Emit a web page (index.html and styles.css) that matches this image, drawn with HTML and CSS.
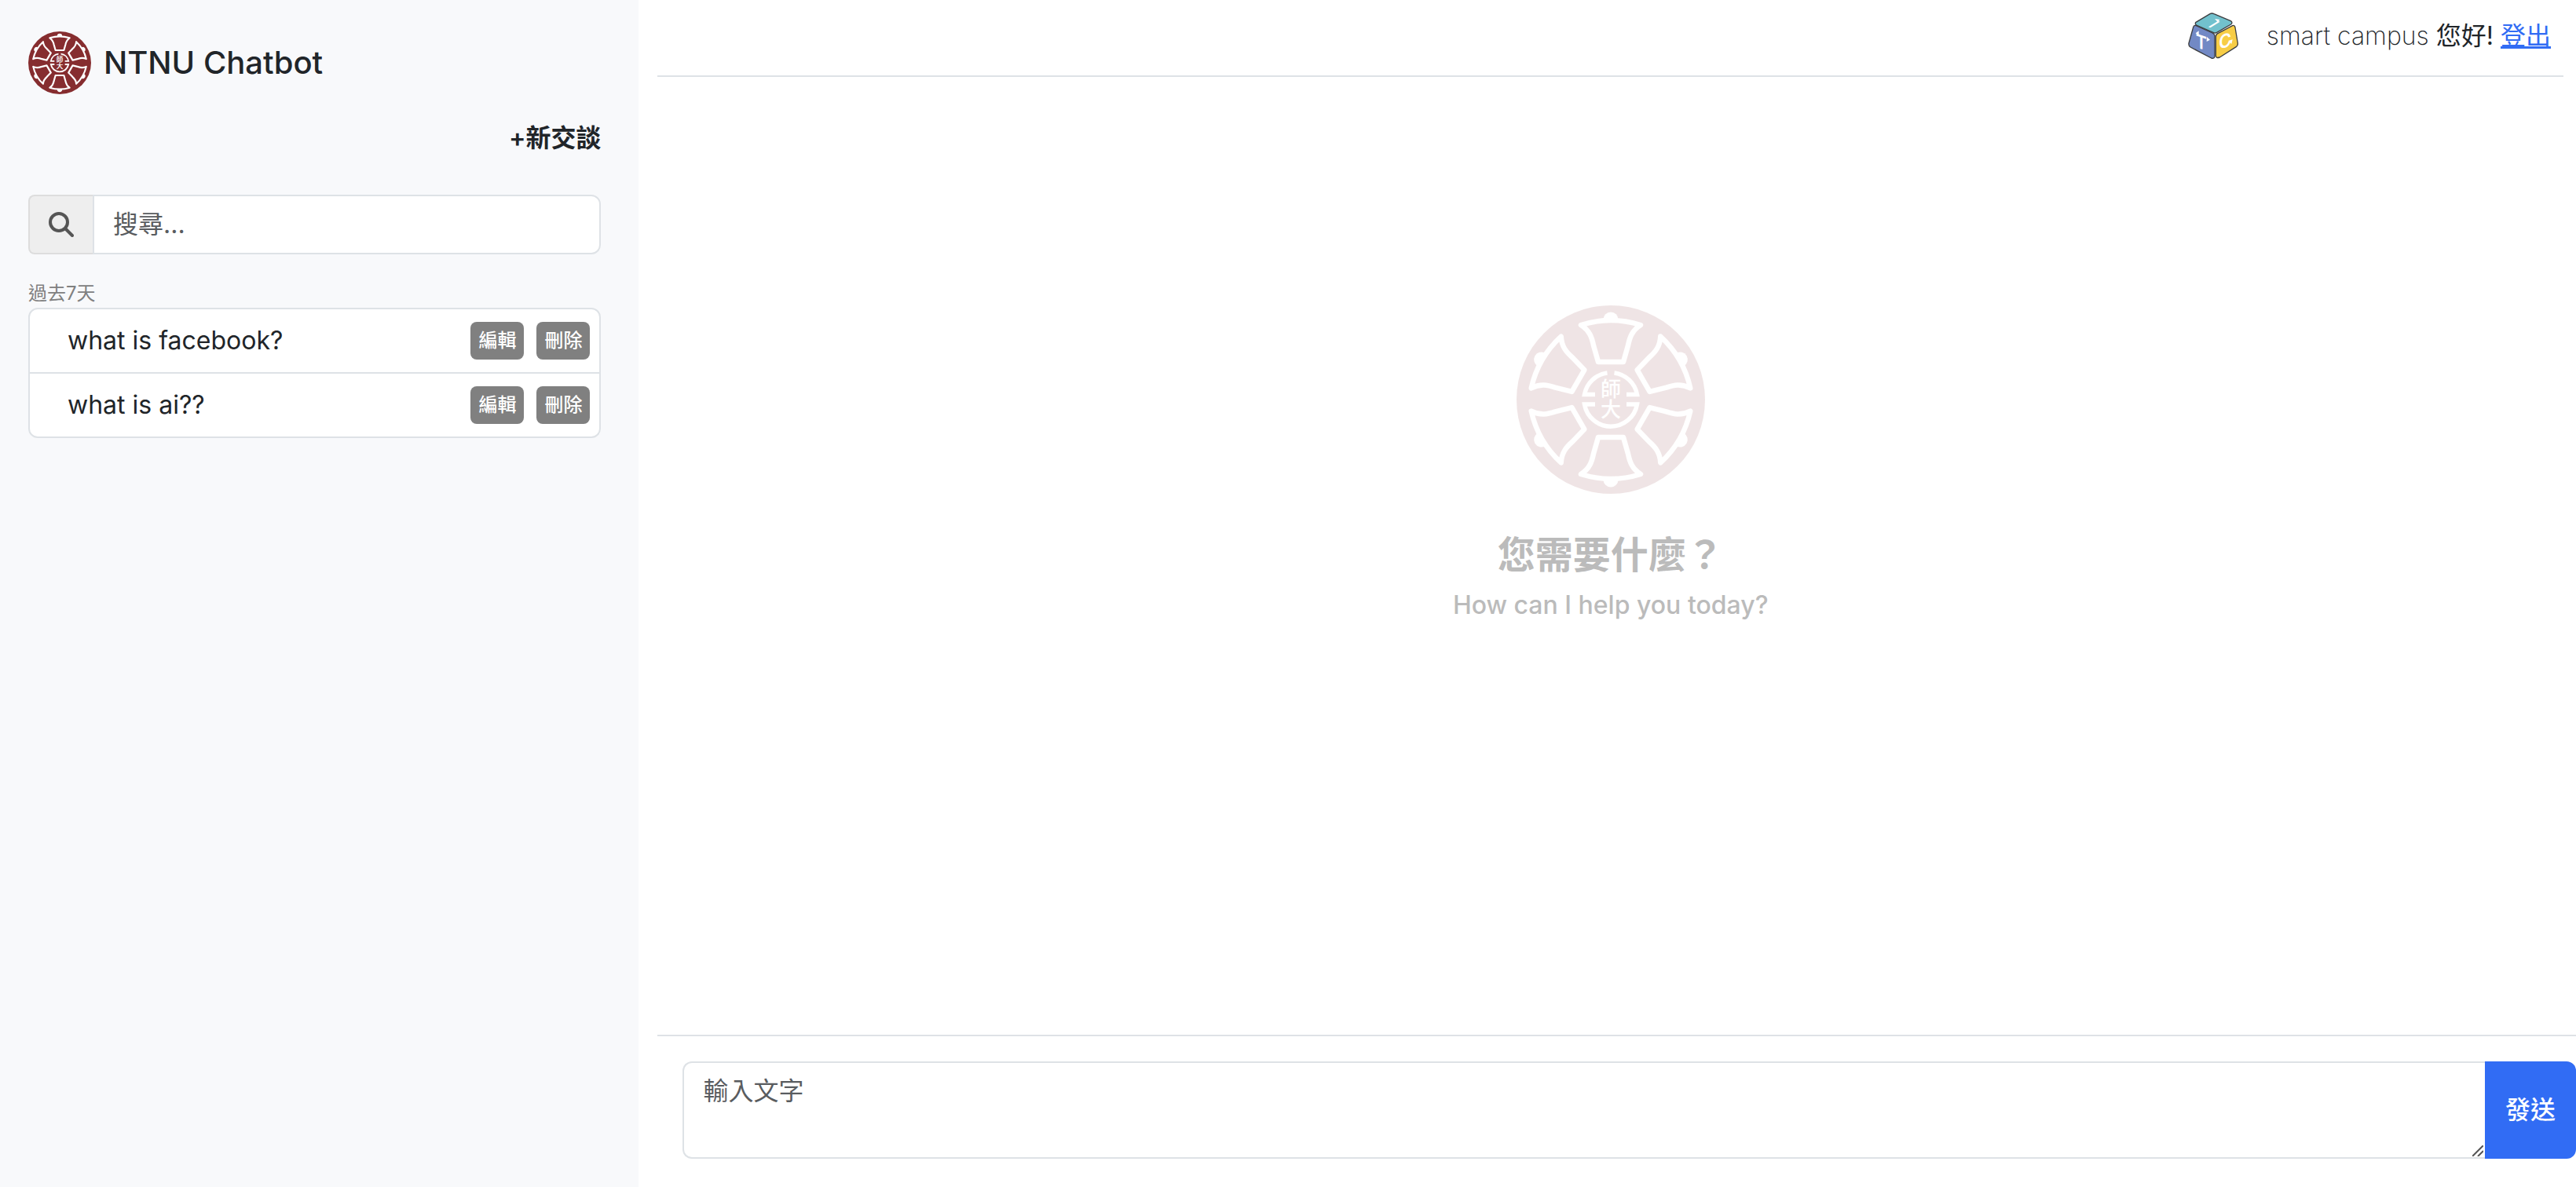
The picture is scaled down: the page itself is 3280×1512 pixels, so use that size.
FILE: index.html
```html
<!DOCTYPE html>
<html lang="zh-Hant">
<head>
    <meta charset="UTF-8">
    <meta name="viewport" content="width=device-width, initial-scale=1">
    <title>NTNU Chatbot</title>
    <link rel="stylesheet" href="styles.css">
</head>
<body>
    <svg class="defs" aria-hidden="true">
        <symbol id="emblem" viewBox="0 0 240 240" overflow="visible">
            <defs>
                <g id="petal">
                    <path d="M82 25 Q120 13 158 25 C147 32 144 41 142 51 L136 72 H104 L98 51 C96 41 93 32 82 25 Z" fill="none" stroke="#fff" stroke-width="6.5" stroke-linejoin="round"/>
                    <path d="M110.500 18 A9.500 9.500 0 0 1 129.500 18 Z" fill="#fff"/>
                </g>
            </defs>
            <circle cx="120" cy="120" r="120" fill="#862d2f"/>
            <use href="#petal"/>
            <use href="#petal" transform="rotate(60 120 120)"/>
            <use href="#petal" transform="rotate(120 120 120)"/>
            <use href="#petal" transform="rotate(180 120 120)"/>
            <use href="#petal" transform="rotate(240 120 120)"/>
            <use href="#petal" transform="rotate(300 120 120)"/>
            <g fill="none" stroke="#fff" stroke-width="5.500">
                <path d="M115.500 86 A34 34 0 0 0 86.500 113.500 H100"/>
                <path d="M124.500 86 A34 34 0 0 1 153.500 113.500 H140"/>
                <path d="M100 126 H86.500 A34 34 0 0 0 153.500 126 H140"/>
            </g>
            <text class="emblem-text" x="120" y="116">師</text>
            <text class="emblem-text" x="120" y="142">大</text>
        </symbol>
    </svg>

    <div class="layout">
        <aside class="sidebar">
            <div class="brand">
                <svg class="brand-logo" role="img" aria-label="NTNU"><use href="#emblem"/></svg>
                <h1>NTNU Chatbot</h1>
            </div>
            <button type="button" class="new-chat">+新交談</button>
            <form class="search">
                <label for="search" aria-label="搜尋">
                    <svg class="search-icon" viewBox="0 0 32 32" fill="none" stroke="#555" stroke-width="4" stroke-linecap="round">
                        <circle cx="13" cy="13" r="11"/>
                        <path d="M21.500 21.500 L30 30"/>
                    </svg>
                </label>
                <input type="text" id="search" placeholder="搜尋...">
            </form>
            <h2 class="period">過去7天</h2>
            <ul class="history">
                <li>
                    <a href="#">what is facebook?</a>
                    <button type="button">編輯</button>
                    <button type="button">刪除</button>
                </li>
                <li>
                    <a href="#">what is ai??</a>
                    <button type="button">編輯</button>
                    <button type="button">刪除</button>
                </li>
            </ul>
        </aside>

        <main class="main">
            <header class="topbar">
                <svg class="itc-logo" viewBox="50 38 192 180" role="img" aria-label="ITC">
                    <g stroke="#3b3d40" stroke-width="4" stroke-linejoin="round">
                        <path d="M80 75 L134 43 Q141 39 149 43 L213 70 Q222 76 214 83 L160 114 Q153 118 146 114 L82 86 Q75 80 80 75 Z" fill="#72c1cd"/>
                        <path d="M81 88 L143 116 Q152 120 152 129 L152 204 Q151 216 139 212 L59 170 Q51 165 53 155 L70 94 Q73 85 81 88 Z" fill="#7289c5"/>
                        <path d="M165 117 L220 88 Q228 85 230 95 L240 155 Q241 163 235 168 L171 209 Q157 214 156 203 L156 130 Q156 121 165 117 Z" fill="#f7cd46"/>
                    </g>
                    <g class="itc-text">
                        <text class="itc-i" transform="matrix(.9 .38 -.9 .55 124 91)">I</text>
                        <text transform="matrix(.9 .3 0 1 79 170)">T</text>
                        <text transform="matrix(.9 -.3 0 1 168 180)">C</text>
                    </g>
                    <g fill="#fff">
                        <path d="M152 62 L171 65 L164 75 Z"/>
                        <path d="M79 117 L91 108 L91 126 Z"/>
                        <path d="M134 142 L122 131 L121 149 Z"/>
                        <path d="M203 146 L220 141 L216 158 Z"/>
                    </g>
                </svg>
                <p><span class="user-name">smart campus</span> 您好! <a href="#">登出</a></p>
            </header>

            <section class="welcome">
                <svg class="welcome-logo" aria-hidden="true"><use href="#emblem"/></svg>
                <h2>您需要什麼？</h2>
                <p>How can I help you today?</p>
            </section>

            <form class="composer">
                <div class="message">
                    <textarea aria-label="輸入文字" placeholder="輸入文字"></textarea>
                    <svg class="grip" viewBox="0 0 14 14" stroke="#555" stroke-width="2" aria-hidden="true">
                        <path d="M0 14 L14 0 M7 14 L14 7"/>
                    </svg>
                </div>
                <button type="submit">發送</button>
            </form>
        </main>
    </div>
</body>
</html>
```

FILE: styles.css
```css
* { box-sizing: border-box; }
body { margin: 0; font-family: Inter, "Noto Sans CJK TC", sans-serif; font-size: 32px; line-height: 48px; color: #212529; background: #fff; }
h1, h2, p, ul { margin: 0; padding: 0; }
button, input, textarea { font: inherit; }
button { border: none; cursor: pointer; }
.defs { position: absolute; width: 0; height: 0; }
.layout { display: flex; min-height: 100vh; }

/* sidebar */
.sidebar { width: 24.8%; padding: 40px 48px 40px 36px; background: #f8f9fb; display: flex; flex-direction: column; }
.brand { display: flex; align-items: center; gap: 16px; }
.brand-logo { width: 80px; height: 80px; overflow: visible; }
.brand h1 { font-size: 40px; font-weight: 500; }
.new-chat { align-self: flex-end; margin: 32px 0 48px; padding: 0; background: none; color: inherit; font-weight: 600; }
.search { display: flex; height: 76px; }
.search label { display: flex; align-items: center; justify-content: center; width: 82px; background: #eee; border: 2px solid #ddd; border-right: none; border-radius: 8px 0 0 8px; }
.search-icon { width: 32px; height: 32px; }
.search input { flex: 1; min-width: 0; padding: 0 24px; background: #fff; border: 2px solid #dee2e6; border-radius: 0 12px 12px 0; }
::placeholder { color: #595c5f; opacity: 1; }
.period { margin-top: 32px; font-size: 24px; font-weight: 400; line-height: 36px; color: #808080; }
.history { list-style: none; background: #fff; border: 2px solid #dee2e6; border-radius: 12px; }
.history li { display: flex; align-items: center; gap: 16px; height: 80px; padding: 0 12px 0 48px; }
.history li + li { height: 82px; border-top: 2px solid #dee2e6; }
.history a { flex: 1; color: inherit; text-decoration: none; }
.history button { height: 48px; padding: 0 10px; background: #808080; color: #fff; font-size: 24px; font-weight: 500; line-height: 36px; border-radius: 8px; }

/* main column */
.main { flex: 1; min-width: 0; padding-left: 24px; display: flex; flex-direction: column; }
.topbar { display: flex; align-items: center; justify-content: flex-end; gap: 36px; height: 98px; margin-right: 16px; padding: 0 16px 4px 0; border-bottom: 2px solid #dee2e6; }
.itc-logo { width: 64px; height: 60px; }
.itc-text { fill: #fff; font-size: 72px; font-weight: 600; }
.itc-i { font-size: 56px; }
.user-name { font-weight: 200; }
.topbar a { color: #316cf4; }
.welcome { flex: 1; display: flex; flex-direction: column; align-items: center; margin-right: 16px; padding-top: 291px; color: #bbb; }
.welcome-logo { width: 240px; height: 240px; opacity: .12; }
.welcome h2 { margin: 42px 0 4px; font-size: 48px; font-weight: 600; line-height: 72px; }
.welcome p { font-weight: 500; }
.emblem-text { fill: #fff; font-size: 26px; font-weight: 500; text-anchor: middle; }

/* message box */
.composer { display: flex; padding: 32px 0 36px 32px; border-top: 2px solid #dee2e6; }
.message { position: relative; flex: 1; height: 124px; }
.message textarea { display: block; width: 100%; height: 100%; padding: 12px 24px; background: #fff; border: 2px solid #dee2e6; border-right: none; border-radius: 12px 0 0 12px; resize: none; }
.grip { position: absolute; right: 2px; bottom: 3px; width: 14px; height: 14px; }
.composer button { padding: 0 26px; background: #316cf4; color: #fff; font-weight: 500; border-radius: 0 12px 12px 0; }
```
